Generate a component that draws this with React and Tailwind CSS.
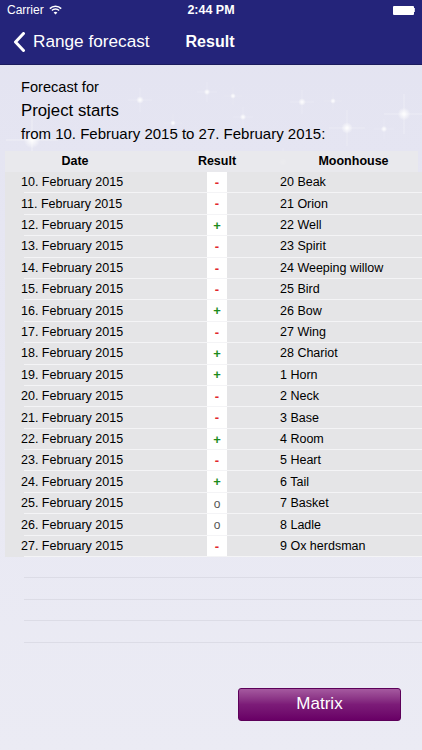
import React from "react";

const rows = [
  ["10. February 2015", "-", "20 Beak"],
  ["11. February 2015", "-", "21 Orion"],
  ["12. February 2015", "+", "22 Well"],
  ["13. February 2015", "-", "23 Spirit"],
  ["14. February 2015", "-", "24 Weeping willow"],
  ["15. February 2015", "-", "25 Bird"],
  ["16. February 2015", "+", "26 Bow"],
  ["17. February 2015", "-", "27 Wing"],
  ["18. February 2015", "+", "28 Chariot"],
  ["19. February 2015", "+", "1 Horn"],
  ["20. February 2015", "-", "2 Neck"],
  ["21. February 2015", "-", "3 Base"],
  ["22. February 2015", "+", "4 Room"],
  ["23. February 2015", "-", "5 Heart"],
  ["24. February 2015", "+", "6 Tail"],
  ["25. February 2015", "o", "7 Basket"],
  ["26. February 2015", "o", "8 Ladle"],
  ["27. February 2015", "-", "9 Ox herdsman"],
];

const stars = [
  { x: 140, y: 100, s: 12 },
  { x: 207, y: 92, s: 10 },
  { x: 233, y: 96, s: 9 },
  { x: 243, y: 117, s: 10 },
  { x: 173, y: 123, s: 9 },
  { x: 302, y: 102, s: 12 },
  { x: 333, y: 101, s: 9 },
  { x: 347, y: 128, s: 18 },
  { x: 404, y: 114, s: 20 },
  { x: 384, y: 129, s: 10 },
  { x: 32, y: 140, s: 26 },
  { x: 283, y: 162, s: 14 },
];

function Sparkle({ x, y, s }) {
  return (
    <svg
      className="absolute pointer-events-none"
      style={{ left: x - s, top: y - s }}
      width={s * 2}
      height={s * 2}
      viewBox="-10 -10 20 20"
    >
      <defs>
        <radialGradient id="glow">
          <stop offset="0%" stopColor="#ffffff" stopOpacity="1" />
          <stop offset="100%" stopColor="#ffffff" stopOpacity="0" />
        </radialGradient>
      </defs>
      <circle cx="0" cy="0" r="3.2" fill="url(#glow)" />
      <path d="M-10 0 L10 0 M0 -10 L0 10" stroke="#ffffff" strokeWidth="0.3" opacity="0.55" />
    </svg>
  );
}

function ResultMark({ v }) {
  if (v === "+") return <span className="text-[#1c8c1c] font-bold text-[13px]">+</span>;
  if (v === "-") return <span className="text-[#e2262b] font-bold text-[13px]">-</span>;
  return <span className="text-[#555555] text-[12px]">o</span>;
}

export default function App() {
  return (
    <div className="relative w-[422px] h-[750px] overflow-hidden bg-gradient-to-b from-[#e3e3f1] via-[#e8e8f3] to-[#ebebf4] font-['Liberation_Sans',Arial,sans-serif] text-black">
      {/* status bar */}
      <div className="h-[20px] bg-[#24247a] flex items-center justify-between px-[7px] text-white relative">
        <div className="flex items-center gap-[5px] text-[12px]">
          <span>Carrier</span>
          <svg width="13" height="10" viewBox="0 0 13 10">
            <path d="M0.8 3.6 A8 8 0 0 1 12.2 3.6" stroke="#fff" strokeWidth="1.5" fill="none" />
            <path d="M2.9 5.6 A5 5 0 0 1 10.1 5.6" stroke="#fff" strokeWidth="1.5" fill="none" />
            <path d="M6.5 9.6 L4.6 7.6 A2.7 2.7 0 0 1 8.4 7.6 Z" fill="#fff" />
          </svg>
        </div>
        <span className="absolute left-1/2 -translate-x-1/2 text-[12.5px] font-bold">2:44 PM</span>
        <div className="flex items-center">
          <div className="w-[21px] h-[9px] bg-white rounded-[1px]" />
          <div className="w-[1.5px] h-[4px] bg-white/80" />
        </div>
      </div>

      {/* nav bar */}
      <div className="h-[45px] bg-[#24247a] border-b border-[#1b1b5e] flex items-center text-white">
        <svg className="ml-[13px]" width="13" height="20" viewBox="0 0 13 20">
          <path d="M10.5 1.5 L2.5 10 L10.5 18.5" stroke="#fff" strokeWidth="3" fill="none" strokeLinecap="round" strokeLinejoin="round" />
        </svg>
        <span className="ml-[7px] text-[17.2px]">Range forecast</span>
        <span className="ml-[36px] text-[16px] font-bold">Result</span>
      </div>

      {stars.map((st, i) => (
        <Sparkle key={i} {...st} />
      ))}

      {/* content */}
      <div className="relative pt-[13px]">
        <div className="pl-[21px] text-[14.6px] leading-[18px]">Forecast for</div>
        <div className="pl-[21px] mt-[4px] text-[16.8px] leading-[22px]">Project starts</div>
        <div className="pl-[21px] mt-[2px] text-[15px] leading-[20px]">from 10. February 2015 to 27. February 2015:</div>

        <div className="mt-[7px] ml-[5px]">
          <div className="grid grid-cols-[140px_144px_1fr] h-[21px] items-center bg-[#e9e9ec]/90 text-[12.5px] font-bold mr-[4px]">
            <span className="text-center">Date</span>
            <span className="text-center">Result</span>
            <span className="text-center">Moonhouse</span>
          </div>
          {rows.map(([d, r, m], i) => (
            <div key={i} className="relative grid grid-cols-[182px_60px_1fr] h-[21.4px] items-center bg-[#e5e5e7] text-[12.5px]">
              <span className="pl-[16px]">{d}</span>
              <span className="h-full flex justify-center">
                <span className="w-[20px] h-full bg-white flex items-center justify-center">
                  <ResultMark v={r} />
                </span>
              </span>
              <span className="pl-[33px]">{m}</span>
              <div className="absolute left-[19px] right-0 bottom-0 h-px bg-[#f4f4f6]" />
            </div>
          ))}
          {[0, 1, 2, 3].map((i) => (
            <div key={i} className="relative h-[21.4px]">
              <div className="absolute left-[19px] right-0 bottom-0 h-px bg-[#dcdce6]" />
            </div>
          ))}
        </div>

        <div className="flex justify-end pr-[21px] mt-[45px]">
          <button className="w-[163px] h-[33px] rounded-[3px] border border-[#5c0059] bg-gradient-to-b from-[#a5599f] via-[#7c1b78] via-50% to-[#690066] text-white text-[17px]">
            Matrix
          </button>
        </div>
      </div>
    </div>
  );
}
